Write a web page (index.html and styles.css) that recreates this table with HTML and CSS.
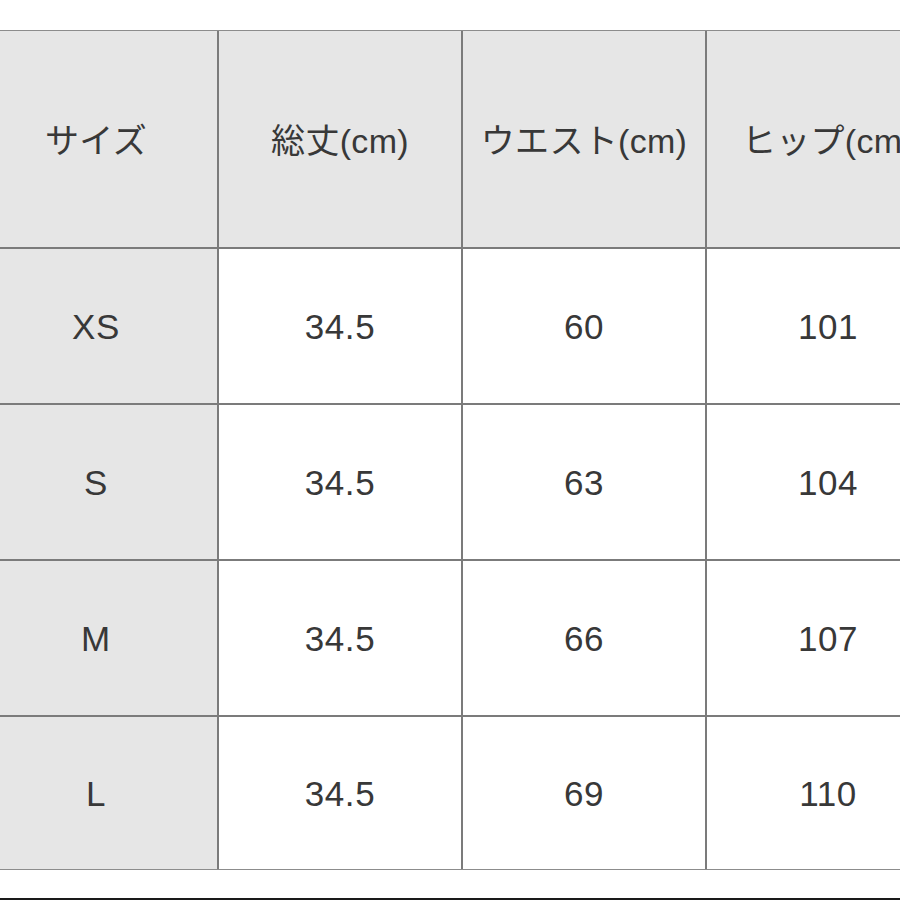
FILE: index.html
```html
<!DOCTYPE html>
<html lang="ja">
<head>
<meta charset="utf-8">
<title>サイズ表</title>
<link rel="stylesheet" href="styles.css">
</head>
<body>
<div class="page">
  <div class="size-table">
    <div class="cell head">サイズ</div>
    <div class="cell head">総丈(cm)</div>
    <div class="cell head">ウエスト(cm)</div>
    <div class="cell head">ヒップ(cm)</div>

    <div class="cell label">XS</div>
    <div class="cell">34.5</div>
    <div class="cell">60</div>
    <div class="cell">101</div>

    <div class="cell label">S</div>
    <div class="cell">34.5</div>
    <div class="cell">63</div>
    <div class="cell">104</div>

    <div class="cell label">M</div>
    <div class="cell">34.5</div>
    <div class="cell">66</div>
    <div class="cell">107</div>

    <div class="cell label">L</div>
    <div class="cell">34.5</div>
    <div class="cell">69</div>
    <div class="cell">110</div>
  </div>
  <div class="rule"></div>
</div>
</body>
</html>
```
FILE: styles.css
```css
html, body {
  margin: 0;
  padding: 0;
  background: #ffffff;
  overflow: hidden;
  width: 900px;
  height: 900px;
}

.page {
  width: 900px;
  height: 900px;
  overflow: hidden;
  padding-top: 30px;
  box-sizing: border-box;
  font-family: "Liberation Sans", "Noto Sans CJK JP", sans-serif;
  color: #383838;
}

.size-table {
  display: grid;
  grid-template-columns: repeat(4, 242px);
  grid-template-rows: 216px 154px 154px 154px 152px;
  gap: 2px;
  width: 974px;
  margin-left: -25px;
  background: #7b7b7b;
  border-top: 1px solid #8c8c8c;
  border-bottom: 1px solid #8c8c8c;
}

.cell {
  background: #ffffff;
  display: flex;
  align-items: center;
  justify-content: center;
  font-size: 35px;
  letter-spacing: 0.6px;
  padding-top: 2px;
}

.cell.head {
  background: #e6e6e6;
  font-size: 34px;
  letter-spacing: 0.3px;
  padding-top: 0;
  padding-bottom: 2px;
}

.cell.label {
  background: #e6e6e6;
}

.rule {
  margin-top: 28px;
  border-top: 2px solid #1a1a1a;
}
```
